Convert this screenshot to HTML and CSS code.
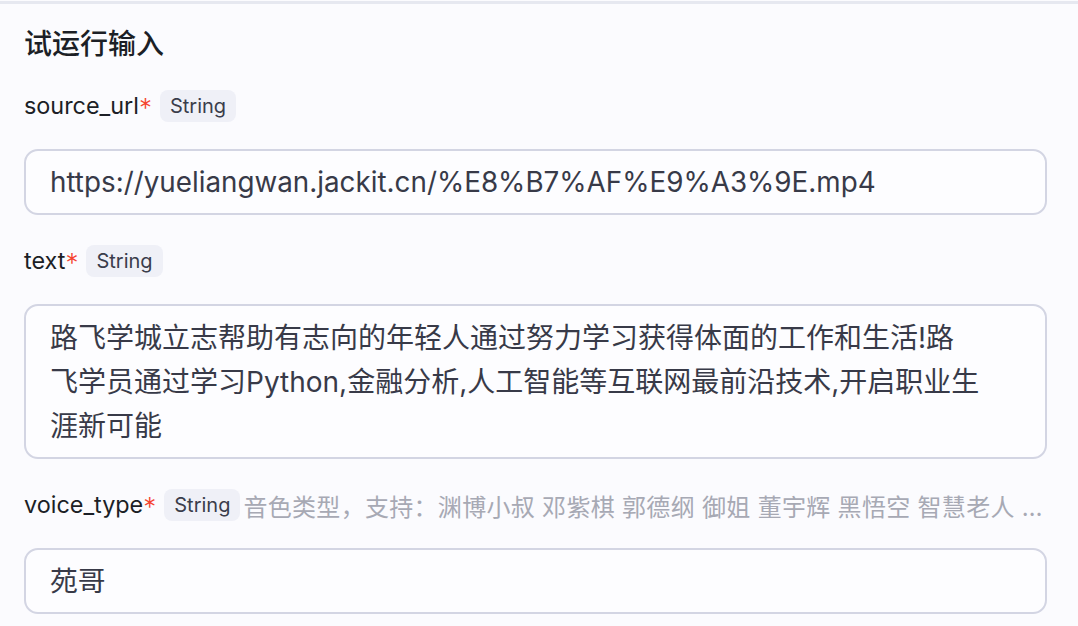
FILE: index.html
```html
<!DOCTYPE html>
<html lang="zh-CN">
<head>
<meta charset="utf-8">
<title>试运行输入</title>
<link rel="stylesheet" href="styles.css">
</head>
<body>
<div class="topbar"></div>
<main class="panel">
  <h1 class="title">试运行输入</h1>

  <section class="field">
    <div class="label-row">
      <span class="label">source_url</span><span class="req">*</span>
      <span class="badge">String</span>
    </div>
    <div class="input">https://yueliangwan.jackit.cn/%E8%B7%AF%E9%A3%9E.mp4</div>
  </section>

  <section class="field">
    <div class="label-row">
      <span class="label">text</span><span class="req">*</span>
      <span class="badge">String</span>
    </div>
    <div class="textarea">路飞学城立志帮助有志向的年轻人通过努力学习获得体面的工作和生活!路<br>飞学员通过学习Python,金融分析,人工智能等互联网最前沿技术,开启职业生<br>涯新可能</div>
  </section>

  <section class="field">
    <div class="label-row">
      <span class="label">voice_type</span><span class="req">*</span>
      <span class="badge">String</span>
      <span class="hint">音色类型，支持：渊博小叔 邓紫棋 郭德纲 御姐 董宇辉 黑悟空 智慧老人 …</span>
    </div>
    <div class="input">苑哥</div>
  </section>
</main>
</body>
</html>
```

FILE: styles.css
```css
* { box-sizing: border-box; }

html, body {
  margin: 0;
  padding: 0;
  background: #fbfbfe;
  font-family: Inter, "Noto Sans CJK SC", sans-serif;
  color: #1c1f26;
}

body { width: 1078px; height: 626px; overflow: hidden; }

.topbar {
  margin-top: 1px;
  height: 3px;
  background: #e6e8f0;
}

.panel {
  padding: 0 31px 0 24px;
}

.title {
  margin: 20px 0 0;
  font-size: 28px;
  line-height: 40px;
  font-weight: 500;
  color: #1c1f26;
}

.field { margin-top: 26px; }
.field + .field { margin-top: 30px; }

.label-row {
  display: flex;
  align-items: center;
  height: 32px;
  white-space: nowrap;
}

.label {
  font-size: 23.4px;
  line-height: 32px;
  color: #1c1f26;
}

.req {
  font-size: 26px;
  font-weight: 300;
  line-height: 32px;
  height: 32px;
  color: #f5442f;
  padding-top: 2px;
}

.badge {
  display: inline-flex;
  align-items: center;
  height: 32px;
  padding: 0 10px;
  margin-left: 8px;
  border-radius: 8px;
  background: #eff0f7;
  color: #3a3d4b;
  font-size: 20px;
}

.hint {
  margin-left: 3px;
  font-size: 24px;
  letter-spacing: 0.3px;
  color: #a7a9b4;
  overflow: hidden;
  text-overflow: ellipsis;
}

.input {
  margin-top: 27px;
  height: 66px;
  border: 2px solid #d3d5e3;
  border-radius: 14px;
  background: #fdfdff;
  padding: 0 24px;
  font-size: 27.8px;
  line-height: 62px;
  color: #383a48;
  white-space: nowrap;
  overflow: hidden;
}

.textarea {
  margin-top: 27px;
  height: 155px;
  border: 2px solid #d3d5e3;
  border-radius: 14px;
  background: #fdfdff;
  padding: 10px 24px 9px;
  font-size: 28px;
  line-height: 44px;
  color: #383a48;
  white-space: nowrap;
}
```
